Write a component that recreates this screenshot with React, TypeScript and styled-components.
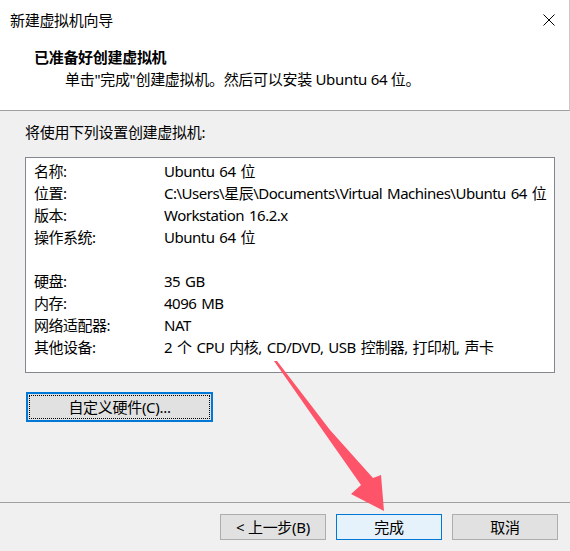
import React from "react";
import styled, { createGlobalStyle } from "styled-components";

const GlobalStyle = createGlobalStyle`
  html, body { margin: 0; padding: 0; }
  body { background: #f0f0f0; }
  * { box-sizing: border-box; }
`;

const Window = styled.div`
  position: relative;
  width: 570px;
  height: 551px;
  display: flex;
  flex-direction: column;
  background: #f0f0f0;
  font-family: "Noto Sans", "Noto Sans CJK SC", sans-serif;
  font-size: 15px;
  letter-spacing: -0.3px;
  color: #000;
  overflow: hidden;
`;

const Header = styled.header`
  flex: none;
  height: 111px;
  background: #fff;
  border-bottom: 1px solid #a0a0a0;
  border-right: 1px solid #c8c8c8;
  display: flex;
  flex-direction: column;
`;

const TitleRow = styled.div`
  height: 40px;
  display: flex;
  align-items: center;
  justify-content: space-between;
  padding: 0 14px 0 10px;
  line-height: 22px;
`;

const CloseButton = styled.div`
  width: 12px;
  height: 12px;
  display: flex;
`;

const Heading = styled.div`
  margin: 6px 0 0 34px;
  line-height: 22px;
  font-weight: 700;
`;

const SubHeading = styled.div`
  padding-left: 65px;
  line-height: 22px;
`;

const Body = styled.main`
  flex: 1;
  display: flex;
  flex-direction: column;
  align-items: flex-start;
  padding: 10px 15px 0 25px;
`;

const Intro = styled.div`
  line-height: 22px;
`;

const ListBox = styled.div`
  margin-top: 14px;
  width: 530px;
  height: 216px;
  background: #fff;
  border: 1px solid #828790;
  padding: 2px 0 0 8px;
  display: grid;
  grid-template-columns: 130px 1fr;
  grid-auto-rows: 22px;
  line-height: 22px;
  white-space: nowrap;
  letter-spacing: -0.5px;
  word-spacing: 1.5px;
`;

const Label = styled.div``;
const Value = styled.div``;
const Spacer = styled.div`
  grid-column: 1 / -1;
`;

const CustomizeButton = styled.button`
  position: relative;
  margin: 19px 0 0 1px;
  width: 187px;
  height: 30px;
  background: #e1e1e1;
  border: 2px solid #0078d7;
  font: inherit;
  letter-spacing: inherit;
  color: #000;
  padding: 0;
  line-height: 24px;
  &::after {
    content: "";
    position: absolute;
    inset: 1px;
    border: 1px dotted #000;
  }
`;

const Footer = styled.footer`
  flex: none;
  height: 49px;
  border-top: 1px solid #a0a0a0;
  display: flex;
  justify-content: flex-end;
  align-items: flex-start;
  gap: 10px;
  padding: 11px 12px 0 0;
`;

const DialogButton = styled.button<{ $primary?: boolean }>`
  width: 106px;
  height: 26px;
  padding: 0;
  font: inherit;
  letter-spacing: inherit;
  line-height: 24px;
  color: #000;
  background: ${(p) => (p.$primary ? "#e5f1fb" : "#e1e1e1")};
  border: 1px solid ${(p) => (p.$primary ? "#0078d7" : "#adadad")};
`;

const Annotation = styled.svg`
  position: absolute;
  left: 0;
  top: 0;
  pointer-events: none;
`;

const rows: [string, string][] = [
  ["名称:", "Ubuntu 64 位"],
  ["位置:", "C:\\Users\\星辰\\Documents\\Virtual Machines\\Ubuntu 64 位"],
  ["版本:", "Workstation 16.2.x"],
  ["操作系统:", "Ubuntu 64 位"],
];

const rows2: [string, string][] = [
  ["硬盘:", "35 GB"],
  ["内存:", "4096 MB"],
  ["网络适配器:", "NAT"],
  ["其他设备:", "2 个 CPU 内核, CD/DVD, USB 控制器, 打印机, 声卡"],
];

export default function App() {
  return (
    <>
      <GlobalStyle />
      <Window>
        <Header>
          <TitleRow>
            <span>新建虚拟机向导</span>
            <CloseButton>
              <svg width="12" height="12" viewBox="0 0 12 12">
                <path d="M0.5 0.5 L11.5 11.5 M11.5 0.5 L0.5 11.5" stroke="#000" strokeWidth="1" fill="none" />
              </svg>
            </CloseButton>
          </TitleRow>
          <Heading>已准备好创建虚拟机</Heading>
          <SubHeading>单击"完成"创建虚拟机。然后可以安装 Ubuntu 64 位。</SubHeading>
        </Header>
        <Body>
          <Intro>将使用下列设置创建虚拟机:</Intro>
          <ListBox>
            {rows.map(([k, v]) => (
              <React.Fragment key={k}>
                <Label>{k}</Label>
                <Value>{v}</Value>
              </React.Fragment>
            ))}
            <Spacer />
            {rows2.map(([k, v]) => (
              <React.Fragment key={k}>
                <Label>{k}</Label>
                <Value>{v}</Value>
              </React.Fragment>
            ))}
          </ListBox>
          <CustomizeButton>自定义硬件(C)...</CustomizeButton>
        </Body>
        <Footer>
          <DialogButton>&lt; 上一步(B)</DialogButton>
          <DialogButton $primary>完成</DialogButton>
          <DialogButton>取消</DialogButton>
        </Footer>
        <Annotation width="570" height="551" viewBox="0 0 570 551">
          <polygon
            points="274,361 277,361 330,430 373,478 381,475 384,511 351,494 361,485"
            fill="#fe5469"
          />
        </Annotation>
      </Window>
    </>
  );
}
